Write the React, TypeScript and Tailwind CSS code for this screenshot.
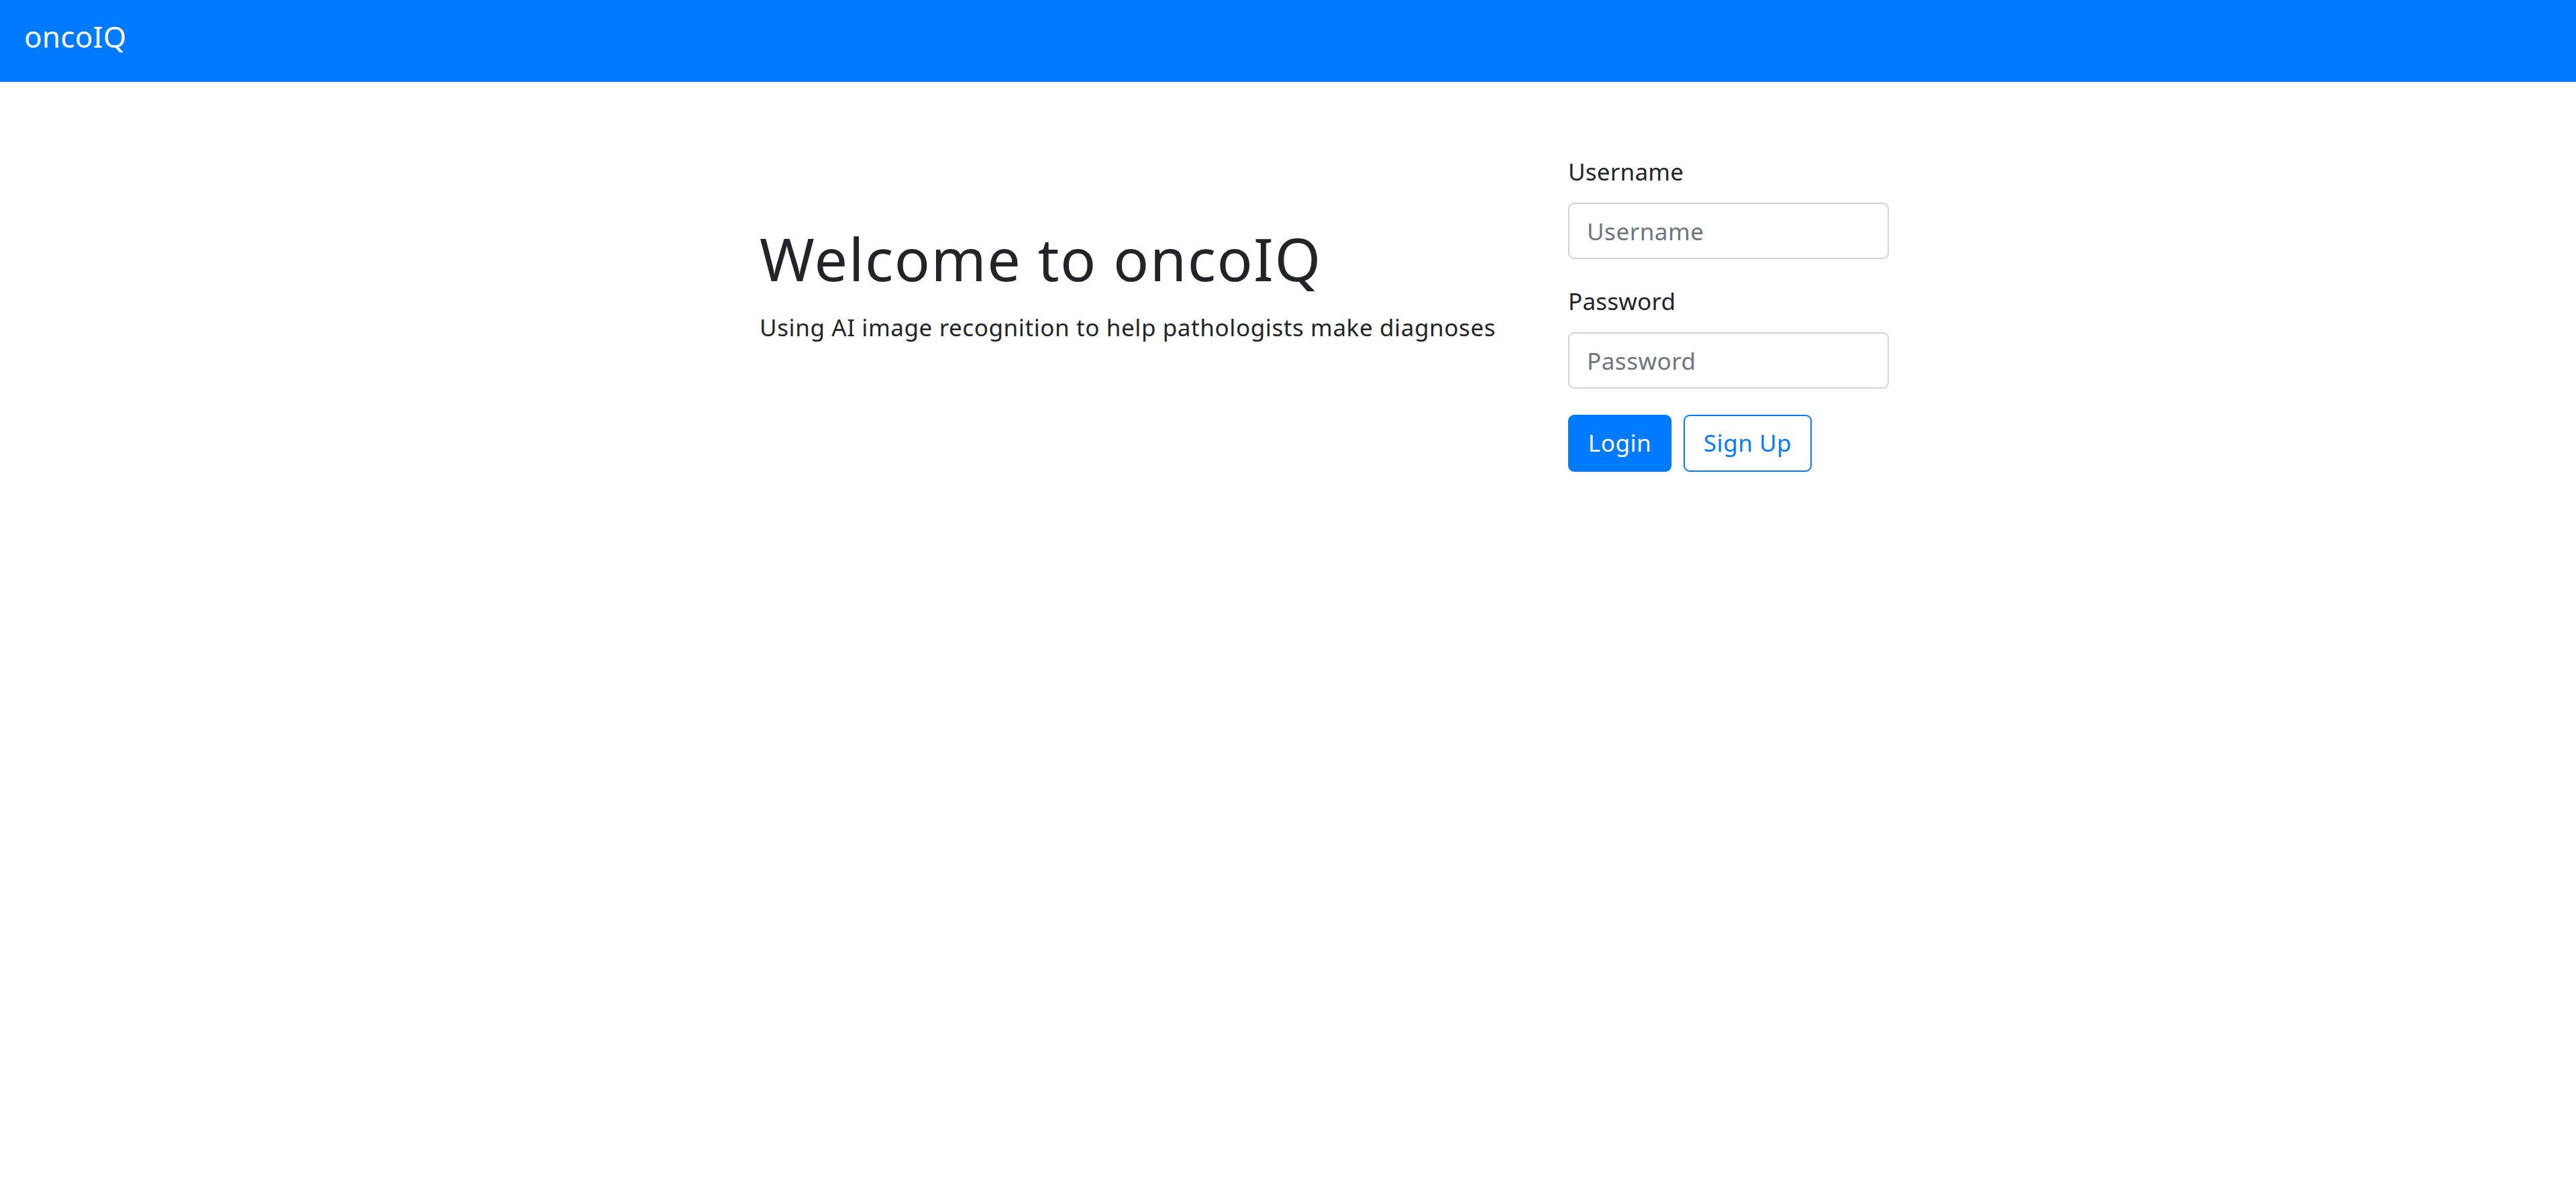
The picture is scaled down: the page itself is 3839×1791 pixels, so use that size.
import React from "react";

const font = { fontFamily: '"Noto Sans", "Open Sans", sans-serif' };

function Navbar() {
  return (
    <nav className="h-[122px] w-full bg-[#007bff] px-[36px] pt-[21px]">
      <a href="#" className="text-[44px] leading-[66px] text-white">
        oncoIQ
      </a>
    </nav>
  );
}

function LoginForm() {
  return (
    <form className="flex w-[478px] flex-col" onSubmit={(e) => e.preventDefault()}>
      <div className="mb-[37px] flex flex-col">
        <label className="mb-[20px] text-[35px] leading-[52px] text-[#212529]">Username</label>
        <input
          type="text"
          placeholder="Username"
          className="h-[84px] w-full rounded-[9px] border-2 border-[#ced4da] bg-white px-[26px] text-[35px] tracking-[0.015em] text-[#495057] outline-none placeholder:text-[#6c757d]"
        />
      </div>
      <div className="mb-[39px] flex flex-col">
        <label className="mb-[20px] text-[35px] leading-[52px] text-[#212529]">Password</label>
        <input
          type="password"
          placeholder="Password"
          className="h-[84px] w-full rounded-[9px] border-2 border-[#ced4da] bg-white px-[26px] text-[35px] tracking-[0.015em] text-[#495057] outline-none placeholder:text-[#6c757d]"
        />
      </div>
      <div className="flex gap-[18px]">
        <button
          type="submit"
          className="h-[85px] w-[154px] rounded-[9px] border-2 border-[#007bff] bg-[#007bff] text-[35px] tracking-[0.015em] text-white"
        >
          Login
        </button>
        <button
          type="button"
          className="h-[85px] w-[191px] rounded-[9px] border-2 border-[#007bff] bg-white text-[35px] tracking-[0.015em] text-[#007bff]"
        >
          Sign Up
        </button>
      </div>
    </form>
  );
}

export default function App() {
  return (
    <div className="min-h-screen bg-white tracking-[0.015em]" style={font}>
      <Navbar />
      <main className="flex justify-center pl-[111px] pt-[108px]">
        <div className="-ml-[3px] mr-[3px] mt-[103px] w-[1202px]">
          <h1 className="mb-[24px] text-[88px] leading-[105px] tracking-[0.017em] text-[#212529]">
            Welcome to oncoIQ
          </h1>
          <p className="text-[35px] leading-[52px] tracking-[0.017em] text-[#212529]">
            Using AI image recognition to help pathologists make diagnoses
          </p>
        </div>
        <LoginForm />
      </main>
    </div>
  );
}
